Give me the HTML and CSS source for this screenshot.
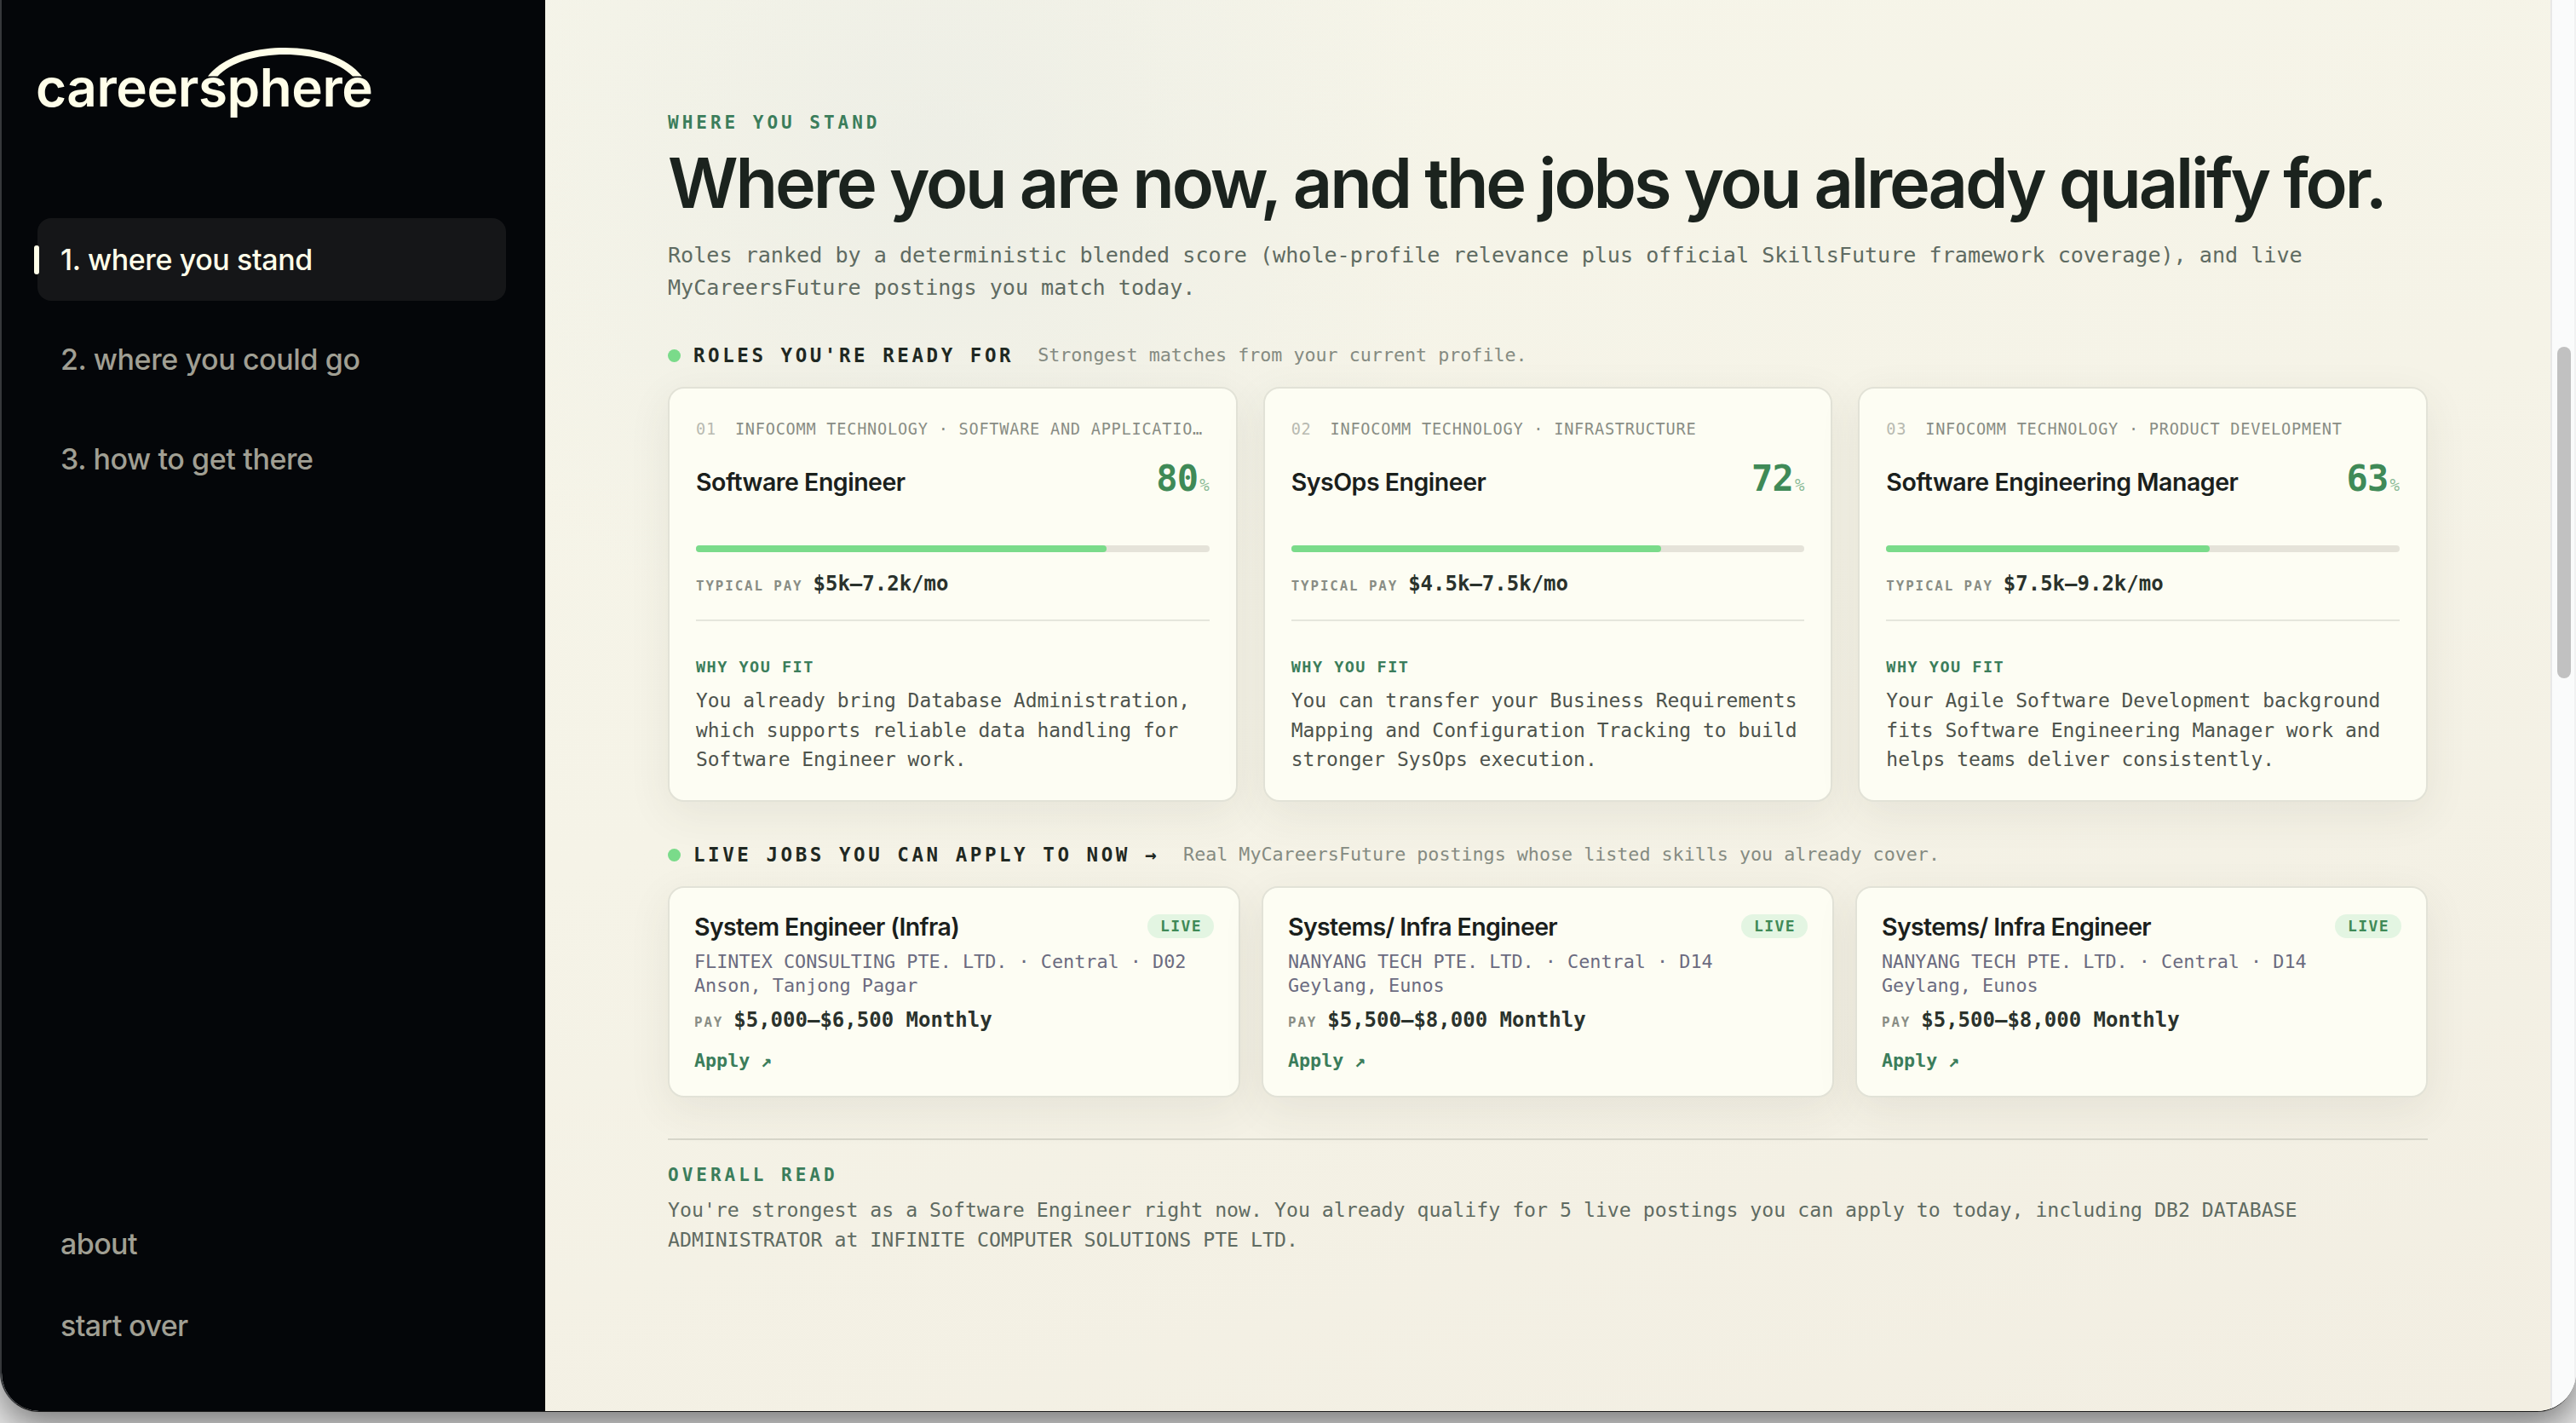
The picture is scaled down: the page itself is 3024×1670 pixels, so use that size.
FILE: index.html
```html
<!DOCTYPE html>
<html lang="en">
<head>
    <meta charset="UTF-8">
    <meta name="viewport" content="width=device-width, initial-scale=1.0">
    <title>careersphere</title>
    <link rel="stylesheet" href="styles.css">
</head>
<body>
    <div class="window">
        <aside class="sidebar">
            <svg class="logo" viewBox="0 0 400 100" role="img" aria-label="careersphere">
                <path fill="#fffee9" d="M204 41.5C222 19 256 8 294.500 8S367 19 385 41.500H374C358 25 328 16 294.500 16S231 25 215.500 41.500Z"/>
                <text class="logo-text" x="2" y="77" textLength="396">careersphere</text>
            </svg>
            <nav class="steps">
                <a class="nav-link active" href="#stand">1. where you stand</a>
                <a class="nav-link" href="#go">2. where you could go</a>
                <a class="nav-link" href="#path">3. how to get there</a>
            </nav>
            <nav class="footer-nav">
                <a class="nav-link" href="#about">about</a>
                <a class="nav-link" href="#restart">start over</a>
            </nav>
        </aside>

        <main class="content" id="stand">
            <p class="eyebrow">WHERE YOU STAND</p>
            <h1>Where you are now, and the jobs you already qualify for.</h1>
            <p class="intro">Roles ranked by a deterministic blended score (whole-profile relevance plus official SkillsFuture framework coverage), and live MyCareersFuture postings you match today.</p>

            <div class="section-head">
                <span class="dot"></span>
                <h2>ROLES YOU'RE READY FOR</h2>
                <span class="hint">Strongest matches from your current profile.</span>
            </div>
            <div class="roles">
                <article class="card role">
                    <div class="track"><span class="rank">01</span><span class="track-name">INFOCOMM TECHNOLOGY · SOFTWARE AND APPLICATIO…</span></div>
                    <div class="role-title"><h3>Software Engineer</h3><span class="score">80<small>%</small></span></div>
                    <div class="meter"><div class="meter-fill" style="width: 80%"></div></div>
                    <div class="pay"><span class="pay-label">TYPICAL PAY</span><strong>$5k–7.2k/mo</strong></div>
                    <div class="fit">
                        <h4>WHY YOU FIT</h4>
                        <p>You already bring Database Administration, which supports reliable data handling for Software Engineer work.</p>
                    </div>
                </article>
                <article class="card role">
                    <div class="track"><span class="rank">02</span><span class="track-name">INFOCOMM TECHNOLOGY · INFRASTRUCTURE</span></div>
                    <div class="role-title"><h3>SysOps Engineer</h3><span class="score">72<small>%</small></span></div>
                    <div class="meter"><div class="meter-fill" style="width: 72%"></div></div>
                    <div class="pay"><span class="pay-label">TYPICAL PAY</span><strong>$4.5k–7.5k/mo</strong></div>
                    <div class="fit">
                        <h4>WHY YOU FIT</h4>
                        <p>You can transfer your Business Requirements Mapping and Configuration Tracking to build stronger SysOps execution.</p>
                    </div>
                </article>
                <article class="card role">
                    <div class="track"><span class="rank">03</span><span class="track-name">INFOCOMM TECHNOLOGY · PRODUCT DEVELOPMENT</span></div>
                    <div class="role-title"><h3>Software Engineering Manager</h3><span class="score">63<small>%</small></span></div>
                    <div class="meter"><div class="meter-fill" style="width: 63%"></div></div>
                    <div class="pay"><span class="pay-label">TYPICAL PAY</span><strong>$7.5k–9.2k/mo</strong></div>
                    <div class="fit">
                        <h4>WHY YOU FIT</h4>
                        <p>Your Agile Software Development background fits Software Engineering Manager work and helps teams deliver consistently.</p>
                    </div>
                </article>
            </div>

            <div class="section-head live-head">
                <span class="dot"></span>
                <h2>LIVE JOBS YOU CAN APPLY TO NOW →</h2>
                <span class="hint">Real MyCareersFuture postings whose listed skills you already cover.</span>
            </div>
            <div class="jobs">
                <article class="card job">
                    <div class="job-title"><h3>System Engineer (Infra)</h3><span class="badge">LIVE</span></div>
                    <p class="company">FLINTEX CONSULTING PTE. LTD. · Central · D02 Anson, Tanjong Pagar</p>
                    <div class="pay"><span class="pay-label">PAY</span><strong>$5,000–$6,500 Monthly</strong></div>
                    <a class="apply" href="#apply">Apply ↗</a>
                </article>
                <article class="card job">
                    <div class="job-title"><h3>Systems/ Infra Engineer</h3><span class="badge">LIVE</span></div>
                    <p class="company">NANYANG TECH PTE. LTD. · Central · D14 Geylang, Eunos</p>
                    <div class="pay"><span class="pay-label">PAY</span><strong>$5,500–$8,000 Monthly</strong></div>
                    <a class="apply" href="#apply">Apply ↗</a>
                </article>
                <article class="card job">
                    <div class="job-title"><h3>Systems/ Infra Engineer</h3><span class="badge">LIVE</span></div>
                    <p class="company">NANYANG TECH PTE. LTD. · Central · D14 Geylang, Eunos</p>
                    <div class="pay"><span class="pay-label">PAY</span><strong>$5,500–$8,000 Monthly</strong></div>
                    <a class="apply" href="#apply">Apply ↗</a>
                </article>
            </div>

            <section class="overall">
                <p class="eyebrow">OVERALL READ</p>
                <p class="summary">You're strongest as a Software Engineer right now. You already qualify for 5 live postings you can apply to today, including DB2 DATABASE ADMINISTRATOR at INFINITE COMPUTER SOLUTIONS PTE LTD.</p>
            </section>
        </main>

        <div class="scrollbar"><div class="thumb"></div></div>
    </div>
</body>
</html>
```
FILE: styles.css
```css
* {
    box-sizing: border-box;
}
body {
    margin: 0;
    height: 1670px;
    overflow: hidden;
    background: #ececec;
    font-family: "DejaVu Sans Mono", monospace;
}
h1, h2, h3, h4, p {
    margin: 0;
}
a {
    text-decoration: none;
}
.window {
    display: flex;
    height: 1657px;
    border-left: 2px solid #36383b;
    border-bottom: 1px solid #1c1c1c;
    border-radius: 0 0 46px 46px;
    overflow: hidden;
    background: #fafbfb;
    box-shadow: 0 16px 44px rgba(0, 0, 0, 0.5);
}

/* Sidebar */
.sidebar {
    display: flex;
    flex-direction: column;
    width: 638px;
    flex: none;
    padding: 48px 46px 52px 42px;
    background: #040609;
    font-family: Inter, sans-serif;
}
.logo {
    width: 400px;
    height: 100px;
    margin-left: -4px;
}
.logo-text {
    fill: #fffee9;
    font-family: Inter, sans-serif;
    font-size: 62px;
    font-weight: 600;
}
.steps {
    display: flex;
    flex-direction: column;
    gap: 20px;
    margin-top: 108px;
}
.footer-nav {
    margin-top: auto;
}
.nav-link {
    display: block;
    position: relative;
    height: 97px;
    padding-left: 27px;
    border-radius: 16px;
    color: #a09f93;
    font-size: 34px;
    font-weight: 550;
    line-height: 97px;
    letter-spacing: -0.4px;
}
.footer-nav .nav-link {
    height: 96px;
    line-height: 96px;
    letter-spacing: -0.6px;
}
.nav-link.active {
    background: #151618;
    color: #fffee9;
}
.nav-link.active::before {
    content: "";
    position: absolute;
    left: -4px;
    top: 32px;
    width: 6px;
    height: 34px;
    border-radius: 3px;
    background: #fffee9;
}

/* Main column */
.content {
    flex: 1;
    min-width: 0;
    padding: 132px 144px 0 144px;
    background:
        radial-gradient(circle at 460px 180px, rgba(226, 230, 226, 0.42), rgba(226, 230, 226, 0) 620px),
        linear-gradient(165deg, #f6f5e9 0%, #f5f3e7 45%, #f2eee2 100%);
}
.eyebrow {
    color: #3b7d5b;
    font-size: 21px;
    font-weight: 700;
    line-height: 24px;
    letter-spacing: 0.19em;
}
h1 {
    margin-top: 14px;
    color: #1b231e;
    font-family: Inter, sans-serif;
    font-size: 81px;
    font-weight: 620;
    line-height: 90px;
    letter-spacing: -3.15px;
    white-space: nowrap;
}
.intro {
    margin-top: 21px;
    color: #5f6b62;
    font-size: 25.1px;
    line-height: 38px;
}
.section-head {
    display: flex;
    align-items: center;
    margin-top: 46px;
    height: 28px;
    line-height: 28px;
}
.live-head {
    margin-top: 48px;
}
.dot {
    width: 15px;
    height: 15px;
    margin-right: 15px;
    border-radius: 50%;
    background: #7adb8a;
}
.section-head h2 {
    color: #1f2822;
    font-size: 22.5px;
    font-weight: 700;
    letter-spacing: 3.55px;
}
.hint {
    margin-left: 28px;
    color: #858b82;
    font-size: 21.7px;
}
.card {
    min-width: 0;
    border: 2px solid #e2e2d7;
    border-radius: 19px;
    background: #fdfdf3;
    box-shadow: 0 14px 50px rgba(60, 70, 50, 0.08);
}

/* Role cards */
.roles {
    display: grid;
    grid-template-columns: repeat(3, 1fr);
    gap: 30px;
    margin-top: 23px;
}
.role {
    height: 487px;
    padding: 36px 31px 0;
}
.track {
    display: flex;
    gap: 22px;
    color: #898d85;
    font-size: 18.6px;
    line-height: 24px;
    letter-spacing: 0.04em;
}
.rank {
    color: #b8bab1;
}
.track-name {
    white-space: nowrap;
}
.role-title {
    display: flex;
    align-items: baseline;
    justify-content: space-between;
    height: 48px;
    margin-top: 22px;
}
h3 {
    color: #1a201c;
    font-family: Inter, sans-serif;
    font-size: 28.5px;
    font-weight: 620;
    line-height: 34px;
    letter-spacing: -0.48px;
}
.score {
    color: #3f8a57;
    font-size: 42px;
    font-weight: 700;
    line-height: 48px;
    letter-spacing: -0.8px;
}
.score small {
    margin-left: 2px;
    color: #8aba96;
    font-size: 19px;
    font-weight: 400;
    letter-spacing: 0;
}
.meter {
    height: 8px;
    margin-top: 54px;
    border-radius: 4px;
    background: #e5e3d9;
}
.meter-fill {
    height: 100%;
    border-radius: 4px;
    background: #7adb8a;
}
.pay {
    display: flex;
    align-items: baseline;
    height: 30px;
    margin-top: 22px;
    line-height: 30px;
}
.pay-label {
    margin-right: 12px;
    color: #898d85;
    font-size: 15.8px;
    font-weight: 700;
    letter-spacing: 0.12em;
}
.pay strong {
    color: #2a322c;
    font-size: 24px;
}
.fit {
    margin-top: 27px;
    padding-top: 42px;
    border-top: 2px solid #e5e6dc;
}
.fit h4 {
    color: #3b7d5b;
    font-size: 18.5px;
    line-height: 24px;
    letter-spacing: 0.08em;
}
.fit p {
    margin-top: 10px;
    color: #4d534c;
    font-size: 22.95px;
    line-height: 34.7px;
}

/* Live job cards */
.jobs {
    display: grid;
    grid-template-columns: repeat(3, 1fr);
    gap: 25px;
    margin-top: 23px;
}
.job {
    height: 248px;
    padding: 29px 29px 0 29px;
}
.job-title {
    display: flex;
    align-items: flex-start;
    justify-content: space-between;
}
.job-title h3 {
    letter-spacing: -0.62px;
}
.badge {
    margin-top: 2px;
    padding: 0 14px 0 15px;
    border-radius: 14px;
    background: #e3f5e2;
    color: #3f8a57;
    font-size: 18px;
    font-weight: 700;
    line-height: 28px;
    letter-spacing: 0.08em;
}
.company {
    margin-top: 10px;
    color: #6b6b80;
    font-size: 21.8px;
    line-height: 28px;
}
.job .pay {
    margin-top: 11px;
}
.apply {
    display: block;
    margin-top: 19px;
    color: #3b7d5b;
    font-size: 21.7px;
    font-weight: 700;
    line-height: 28px;
}

.overall {
    margin-top: 48px;
    padding-top: 29px;
    border-top: 2px solid #d7d6ca;
}
.summary {
    margin-top: 12px;
    color: #5f6b62;
    font-size: 23.2px;
    line-height: 34.5px;
}

.scrollbar {
    width: 30px;
    flex: none;
    padding: 407px 6px 0 6px;
    border-left: 2px solid #e8e8e8;
    border-right: 2px solid #f1f1f1;
    background: #fafbfb;
}
.thumb {
    width: 16px;
    height: 389px;
    border-radius: 8px;
    background: #c1c1c1;
}
```
